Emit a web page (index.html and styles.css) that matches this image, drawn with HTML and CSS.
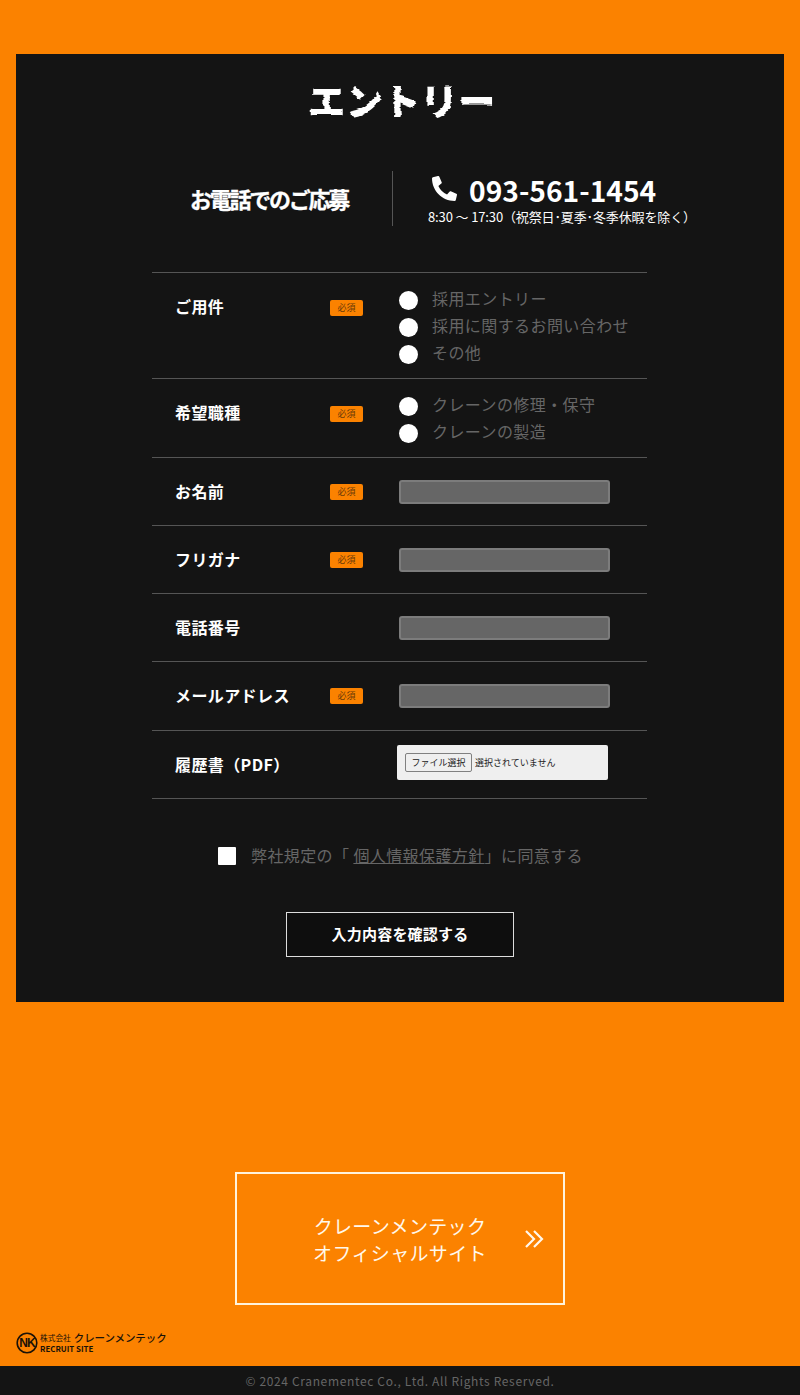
FILE: index.html
```html
<!DOCTYPE html>
<html lang="ja">
<head>
<meta charset="utf-8">
<title>エントリー</title>
<link rel="stylesheet" href="styles.css">
</head>
<body>
<svg class="defs" width="0" height="0" aria-hidden="true">
  <filter id="rough" x="-5%" y="-10%" width="110%" height="120%">
    <feTurbulence type="fractalNoise" baseFrequency="0.04 0.35" numOctaves="2" seed="4"/>
    <feDisplacementMap in="SourceGraphic" scale="4" xChannelSelector="R" yChannelSelector="A"/>
  </filter>
</svg>
<main class="card">
  <h1 class="title">エントリー</h1>
  <section class="tel">
    <div class="tel-label">お電話でのご応募</div>
    <div class="tel-info">
      <div class="tel-number">
        <svg class="tel-icon" viewBox="0 0 512 512"><path d="M14.6 361.8l112-48a24 24 0 0 1 28 6.9l49.6 60.6a370.66 370.66 0 0 0 177.2-177.2l-60.6-49.6a23.94 23.94 0 0 1-6.9-28l48-112A24.16 24.16 0 0 1 389.4.61l104 24A24 24 0 0 1 512 48c0 256.5-207.9 464-464 464a24 24 0 0 1-23.4-18.6l-24-104a24.29 24.29 0 0 1 14-27.6z" transform="translate(512 0) scale(-1 1)" fill="#fff"/></svg>
        <span>093-561-1454</span>
      </div>
      <div class="tel-hours">8:30 〜 17:30（祝祭日･夏季･冬季休暇を除く）</div>
    </div>
  </section>
  <form class="form">
    <div class="row row-options">
      <div class="label">ご用件</div>
      <div class="badge-cell"><span class="badge">必須</span></div>
      <div class="options">
        <label class="option"><input type="radio" name="a"><span>採用エントリー</span></label>
        <label class="option"><input type="radio" name="a"><span>採用に関するお問い合わせ</span></label>
        <label class="option"><input type="radio" name="a"><span>その他</span></label>
      </div>
    </div>
    <div class="row row-options">
      <div class="label">希望職種</div>
      <div class="badge-cell"><span class="badge">必須</span></div>
      <div class="options">
        <label class="option"><input type="radio" name="b"><span>クレーンの修理・保守</span></label>
        <label class="option"><input type="radio" name="b"><span>クレーンの製造</span></label>
      </div>
    </div>
    <div class="row">
      <div class="label">お名前</div>
      <div class="badge-cell"><span class="badge">必須</span></div>
      <input class="text-input" type="text">
    </div>
    <div class="row">
      <div class="label">フリガナ</div>
      <div class="badge-cell"><span class="badge">必須</span></div>
      <input class="text-input" type="text">
    </div>
    <div class="row">
      <div class="label">電話番号</div>
      <div class="badge-cell"></div>
      <input class="text-input" type="text">
    </div>
    <div class="row">
      <div class="label">メールアドレス</div>
      <div class="badge-cell"><span class="badge">必須</span></div>
      <input class="text-input" type="text">
    </div>
    <div class="row row-file">
      <div class="label">履歴書（PDF）</div>
      <div class="badge-cell"></div>
      <div class="file">
        <button class="file-button" type="button">ファイル選択</button>
        <span>選択されていません</span>
      </div>
    </div>
    <label class="agree">
      <input type="checkbox">
      <span>弊社規定の「 <a href="#">個人情報保護方針</a>」に同意する</span>
    </label>
    <button class="submit" type="button"><span>入力内容を確認する</span></button>
  </form>
</main>
<div class="official-wrap">
  <a class="official" href="#">
    <span class="official-text">クレーンメンテック<br>オフィシャルサイト</span>
    <svg class="chevrons" viewBox="0 0 20 20"><path d="M2 2l8 8-8 8M10 2l8 8-8 8" fill="none" stroke="#fff8ec" stroke-width="2.2"/></svg>
  </a>
</div>
<div class="logo">
  <svg class="logo-mark" viewBox="0 0 22 22"><circle cx="11" cy="11" r="9.8" fill="none" stroke="#1a1208" stroke-width="1.6"/><text x="11" y="15.3" text-anchor="middle">NK</text></svg>
  <div class="logo-text">
    <div class="logo-top"><span class="logo-corp">株式会社</span><span class="logo-name">クレーンメンテック</span></div>
    <div class="logo-sub">RECRUIT SITE</div>
  </div>
</div>
<footer class="footer">© 2024 Cranementec Co., Ltd. All Rights Reserved.</footer>
</body>
</html>
```

FILE: styles.css
```css
* { box-sizing: border-box; }
html, body { margin: 0; padding: 0; }
body {
  width: 800px;
  height: 1395px;
  background: #fb8200;
  font-family: "Noto Sans CJK JP", "Noto Sans", sans-serif;
  color: #fff;
  overflow: hidden;
}
.defs { display: block; height: 0; }
.card {
  margin: 54px 16px 0;
  height: 948px;
  background: #141414;
  padding-top: 20px;
}
.title {
  margin: 0;
  height: 52px;
  padding-left: 4px;
  font-size: 37px;
  line-height: 52px;
  font-weight: 900;
  text-align: center;
  letter-spacing: 0.5px;
  filter: url(#rough);
}
.tel {
  margin-top: 45px;
  height: 55px;
  display: grid;
  grid-template-columns: 377px 1fr;
}
.tel-label {
  border-right: 1px solid #555;
  padding-left: 174px;
  font-size: 22px;
  font-weight: 700;
  letter-spacing: -2.25px;
  line-height: 55px;
  height: 55px;
  white-space: nowrap;
  -webkit-text-stroke: 0.3px #fff;
}
.tel-info { padding-left: 35px; }
.tel-number {
  display: flex;
  align-items: center;
  height: 40px;
  margin-top: -2px;
  margin-left: 4px;
  font-size: 28.2px;
  font-weight: 700;
}
.tel-icon { width: 25px; height: 25px; margin-right: 12px; margin-top: -2px; }
.tel-hours {
  font-size: 13px;
  line-height: 18px;
  margin-top: -1px;
  white-space: nowrap;
  letter-spacing: -0.13px;
}
.form { margin: 46px 137px 0 136px; border-top: 1px solid #555; }
.row {
  display: grid;
  grid-template-columns: 178px 69px 1fr;
  align-items: start;
  padding: 22px 0 21.15px;
  border-bottom: 1px solid #555;
}
.row-options { padding: 14px 0 10px; }
.row-file { padding: 14px 0 18px; }
.label {
  padding-left: 23px;
  margin-top: -1px;
  font-size: 16px;
  font-weight: 700;
  line-height: 24px;
  letter-spacing: 0.4px;
  white-space: nowrap;
}
.row-options .label { margin-top: 7px; }
.row-file .label { margin-top: 7px; }
.badge-cell { height: 24px; display: flex; align-items: center; }
.row-options .badge-cell { margin-top: 9px; height: 24px; }
.badge {
  display: block;
  width: 33px;
  height: 16px;
  border-radius: 2px;
  background: #fb8200;
  color: #6a3a08;
  font-size: 9px;
  line-height: 16px;
  text-align: center;
}
.options { display: flex; flex-direction: column; }
.option {
  display: flex;
  align-items: center;
  height: 27px;
  color: #666;
  font-size: 16px;
  letter-spacing: 0.42px;
  white-space: nowrap;
}
.option span { line-height: 20px; margin-bottom: 6px; }
.option input {
  appearance: none;
  margin: 0 14px 0 0;
  width: 19px;
  height: 19px;
  border-radius: 50%;
  background: #fff;
  flex: none;
}
.text-input {
  appearance: none;
  display: block;
  width: 211px;
  height: 24px;
  margin: 0;
  border: 2px solid #7c7c7c;
  border-radius: 3px;
  background: #666;
}
.file {
  margin-left: -2px;
  width: 211px;
  height: 35px;
  background: #efefef;
  border-radius: 2px;
  padding-left: 8px;
  display: flex;
  align-items: center;
  color: #222;
  font-size: 9px;
  white-space: nowrap;
}
.file-button {
  height: 19px;
  width: 67px;
  margin-right: 3px;
  padding: 0;
  background: #efefef;
  border: 1px solid #808080;
  border-radius: 2px;
  color: #222;
  font: inherit;
}
.agree {
  display: flex;
  align-items: center;
  margin: 45px 0 0 66px;
  height: 24px;
  color: #666;
  font-size: 16px;
  letter-spacing: 0.4px;
  white-space: nowrap;
}
.agree span { line-height: 20px; margin-bottom: 2px; }
.agree input {
  appearance: none;
  margin: 0 15px 0 0;
  width: 18px;
  height: 18px;
  border-radius: 1px;
  background: #fff;
  flex: none;
}
.agree a { color: #666; }
.submit {
  display: block;
  width: 228px;
  height: 45px;
  margin: 44px 0 0 134px;
  padding: 0 0 2px;
  background: #0e0e0e;
  border: 1px solid #ddd;
  color: #fff;
  font-family: inherit;
  font-size: 15px;
  font-weight: 700;
  letter-spacing: 0.2px;
}
.official-wrap { margin-top: 170px; display: flex; justify-content: center; }
.official {
  position: relative;
  width: 330px;
  height: 133px;
  border: 2px solid #fff3dc;
  display: flex;
  align-items: center;
  justify-content: center;
  text-decoration: none;
  color: #fff8ec;
}
.official-text {
  font-size: 19px;
  line-height: 27px;
  letter-spacing: 0.35px;
  text-align: center;
}
.chevrons { position: absolute; left: 287px; top: 55px; width: 20px; height: 20px; }
.logo {
  margin: 25px 0 0 16px;
  height: 25px;
  display: flex;
  align-items: center;
  gap: 2px;
  color: #1a1208;
}
.logo-mark { width: 22px; height: 22px; flex: none; }
.logo-mark text {
  font-family: "Liberation Sans", sans-serif;
  font-size: 12px;
  font-weight: 700;
  fill: #1a1208;
  letter-spacing: -1px;
}
.logo-text { display: flex; flex-direction: column; }
.logo-top { display: flex; align-items: center; gap: 3px; height: 13px; }
.logo-corp { font-size: 7.7px; line-height: 13px; }
.logo-name { font-size: 10.5px; font-weight: 500; line-height: 13px; letter-spacing: -0.1px; }
.logo-sub {
  font-size: 7.9px;
  font-weight: 700;
  line-height: 10px;
  white-space: nowrap;
}
.footer {
  position: absolute;
  left: 0;
  right: 0;
  bottom: 0;
  height: 29px;
  background: #141414;
  color: #666;
  font-size: 12px;
  line-height: 29px;
  text-align: center;
  letter-spacing: 0.65px;
}
```
